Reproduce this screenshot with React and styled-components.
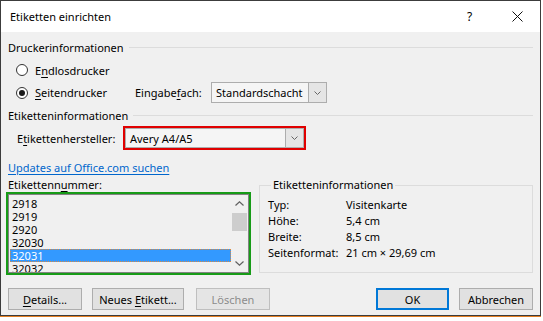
import React from 'react';
import styled, {createGlobalStyle} from 'styled-components';

const GlobalStyle = createGlobalStyle`
    html, body {
        margin: 0;
        background: #fff;
    }
    body {
        font-family: "Noto Sans", "Segoe UI", sans-serif;
        font-size: 11px;
        color: #000;
    }
`;

const Screen = styled.div`
    width: 543px;
    height: 321px;
    background: #fff;
    overflow: hidden;
`;

const Window = styled.div`
    width: 541px;
    height: 316px;
    box-sizing: border-box;
    border: 1px solid #3c3c3c;
    display: flex;
    flex-direction: column;
    background: #f0f0f0;
`;

const Ground = styled.div`
    width: 541px;
    height: 1px;
    background: #e47f22;
`;

const TitleBar = styled.div`
    height: 31px;
    flex: none;
    background: #fff;
    display: flex;
    align-items: center;
    padding-left: 9px;
`;

const Title = styled.span`
    flex: 1;
`;

const Help = styled.span`
    width: 10px;
    font-size: 12px;
    margin-right: 35px;
`;

const Close = styled.span`
    display: flex;
    margin-right: 17px;
`;

const Body = styled.div`
    flex: 1;
    padding: 7px 7px 0 7px;
    display: flex;
    flex-direction: column;
`;

const Header = styled.div`
    height: 16px;
    margin-top: ${p => p.$top || 0}px;
    display: flex;
    align-items: center;
    gap: 5px;
    &::after {
        content: "";
        flex: 1;
        height: 1px;
        background: #dcdcdc;
    }
`;

const Row = styled.div`
    height: ${p => p.$h}px;
    margin-top: ${p => p.$top}px;
    padding-left: ${p => p.$left || 0}px;
    display: flex;
    align-items: center;
`;

const Option = styled.div`
    width: ${p => p.$w || 'auto'};
    display: flex;
    align-items: center;
`;

const Radio = styled.span`
    width: 12px;
    height: 12px;
    box-sizing: border-box;
    border: 1px solid #333;
    border-radius: 50%;
    margin-right: 7px;
    display: flex;
    align-items: center;
    justify-content: center;
    background: #fff;
    &::after {
        content: "";
        width: 6px;
        height: 6px;
        border-radius: 50%;
        background: ${p => (p.$on ? '#1a1a1a' : 'transparent')};
    }
`;

const Label = styled.span`
    width: ${p => (p.$w ? `${p.$w}px` : 'auto')};
    flex: none;
`;

const Key = styled.span`
    text-decoration: underline;
    text-underline-offset: 2px;
`;

const Select = styled.div`
    width: ${p => p.$w}px;
    height: ${p => p.$h}px;
    box-sizing: border-box;
    border: 1px solid #adadad;
    background: #f5f5f5;
    display: flex;
    outline: ${p => (p.$mark ? `2px solid ${p.$mark}` : 'none')};
`;

const SelectValue = styled.span`
    flex: 1;
    padding-left: 4px;
    display: flex;
    align-items: center;
`;

const DropButton = styled.span`
    width: 17px;
    border-left: 1px solid #adadad;
    background: #e5e5e5;
    display: flex;
    align-items: center;
    justify-content: center;
`;

const Link = styled.a`
    color: #0066cc;
    text-decoration: underline;
    text-underline-offset: 2px;
`;

const Lower = styled.div`
    margin-top: 1px;
    display: flex;
    gap: 10px;
`;

const NumberColumn = styled.div`
    width: 241px;
    display: flex;
    flex-direction: column;
`;

const ListBox = styled.div`
    margin-top: 2px;
    height: 79px;
    box-sizing: border-box;
    border: 1px solid #828282;
    outline: 2px solid #179b17;
    background: #f0f0f0;
    display: flex;
    overflow: hidden;
`;

const Items = styled.div`
    flex: 1;
    padding: 2px 0 0 1px;
`;

const Item = styled.div`
    height: 13px;
    line-height: 13px;
    padding-left: 2px;
    color: ${p => (p.$selected ? '#fff' : '#000')};
    background: ${p => (p.$selected ? '#3399ff' : 'transparent')};
    outline: ${p => (p.$selected ? '1px dotted #d9893f' : 'none')};
    outline-offset: -1px;
`;

const ScrollBar = styled.div`
    width: 17px;
    display: flex;
    flex-direction: column;
    align-items: center;
`;

const Arrow = styled.span`
    height: 17px;
    display: flex;
    align-items: center;
`;

const Thumb = styled.span`
    width: 15px;
    height: 18px;
    background: #cdcdcd;
    margin-top: 1px;
    flex: none;
`;

const Track = styled.span`
    flex: 1;
`;

const Group = styled.fieldset`
    flex: 1;
    margin: 1px 0 0 0;
    height: 96px;
    box-sizing: border-box;
    border: 1px solid #dcdcdc;
    padding: 3px 0 0 8px;
    min-width: 0;
`;

const Legend = styled.legend`
    padding: 0 2px;
    margin-left: 3px;
    line-height: 16px;
`;

const InfoRow = styled.div`
    height: 16px;
    display: flex;
    align-items: center;
`;

const InfoKey = styled.span`
    width: 78px;
`;

const Buttons = styled.div`
    margin-top: 15px;
    display: flex;
    align-items: center;
`;

const Button = styled.button`
    width: ${p => p.$w || 74}px;
    height: 22px;
    margin-left: ${p => p.$gap || 0}px;
    box-sizing: border-box;
    font: inherit;
    padding: 0;
    background: ${p => (p.$disabled ? '#e5e5e5' : '#e1e1e1')};
    color: ${p => (p.$disabled ? '#8c8c8c' : '#000')};
    border: ${p => (p.$default ? '2px solid #0078d7' : `1px solid ${p.$disabled ? '#bfbfbf' : '#adadad'}`)};
`;

const Spacer = styled.span`
    flex: 1;
`;

function Chevron({up}) {
    return (
        <svg width="9" height="5" viewBox="0 0 9 5">
            <path
                d={up ? 'M0.5 4.5 L4.5 0.8 L8.5 4.5' : 'M0.5 0.5 L4.5 4.2 L8.5 0.5'}
                fill="none"
                stroke="#606060"
                strokeWidth="1.2"
            />
        </svg>
    );
}

function SmallChevron() {
    return (
        <svg width="7" height="4" viewBox="0 0 7 4">
            <path d="M0.5 0.5 L3.5 3.5 L6.5 0.5" fill="none" stroke="#666" strokeWidth="1"/>
        </svg>
    );
}

const numbers = ['2918', '2919', '2920', '32030', '32031', '32032'];

const info = [
    ['Typ:', 'Visitenkarte'],
    ['Höhe:', '5,4 cm'],
    ['Breite:', '8,5 cm'],
    ['Seitenformat:', '21 cm × 29,69 cm']
];

export default function App() {
    return (
        <Screen>
            <GlobalStyle/>
            <Window>
                <TitleBar>
                    <Title>Etiketten einrichten</Title>
                    <Help>?</Help>
                    <Close>
                        <svg width="11" height="11" viewBox="0 0 11 11">
                            <path d="M0.5 0.5 L10.5 10.5 M10.5 0.5 L0.5 10.5" stroke="#111" strokeWidth="1"/>
                        </svg>
                    </Close>
                </TitleBar>
                <Body>
                    <Header>Druckerinformationen</Header>
                    <Row $h={20} $top={5} $left={8}>
                        <Option>
                            <Radio/>
                            <span>E<Key>n</Key>dlosdrucker</span>
                        </Option>
                    </Row>
                    <Row $h={21} $top={2} $left={8}>
                        <Option $w="119px">
                            <Radio $on/>
                            <span><Key>S</Key>eitendrucker</span>
                        </Option>
                        <Label $w={76}>Eingabe<Key>f</Key>ach:</Label>
                        <Select $w={116} $h={21}>
                            <SelectValue>Standardschacht</SelectValue>
                            <DropButton><SmallChevron/></DropButton>
                        </Select>
                    </Row>
                    <Header $top={4}>Etiketteninformationen</Header>
                    <Row $h={20} $top={5} $left={9}>
                        <Label $w={108}>E<Key>t</Key>ikettenhersteller:</Label>
                        <Select $w={179} $h={20} $mark="#e00000">
                            <SelectValue>Avery A4/A5</SelectValue>
                            <DropButton><SmallChevron/></DropButton>
                        </Select>
                    </Row>
                    <Row $h={16} $top={11}>
                        <Link href="#">Updates auf Office.com suchen</Link>
                    </Row>
                    <Lower>
                        <NumberColumn>
                            <Row $h={16} $top={0}>
                                <span>Etikettenn<Key>u</Key>mmer:</span>
                            </Row>
                            <ListBox>
                                <Items>
                                    {numbers.map(n => (
                                        <Item key={n} $selected={n === '32031'}>{n}</Item>
                                    ))}
                                </Items>
                                <ScrollBar>
                                    <Arrow><Chevron up/></Arrow>
                                    <Thumb/>
                                    <Track/>
                                    <Arrow><Chevron/></Arrow>
                                </ScrollBar>
                            </ListBox>
                        </NumberColumn>
                        <Group>
                            <Legend>Etiketteninformationen</Legend>
                            {info.map(([k, v]) => (
                                <InfoRow key={k}>
                                    <InfoKey>{k}</InfoKey>
                                    <span>{v}</span>
                                </InfoRow>
                            ))}
                        </Group>
                    </Lower>
                    <Buttons>
                        <Button><Key>D</Key>etails...</Button>
                        <Button $w={92} $gap={10}>Neues <Key>E</Key>tikett...</Button>
                        <Button $gap={12} $disabled>Löschen</Button>
                        <Spacer/>
                        <Button $w={73} $default>OK</Button>
                        <Button $gap={10}>Abbrechen</Button>
                    </Buttons>
                </Body>
            </Window>
            <Ground/>
        </Screen>
    );
}
